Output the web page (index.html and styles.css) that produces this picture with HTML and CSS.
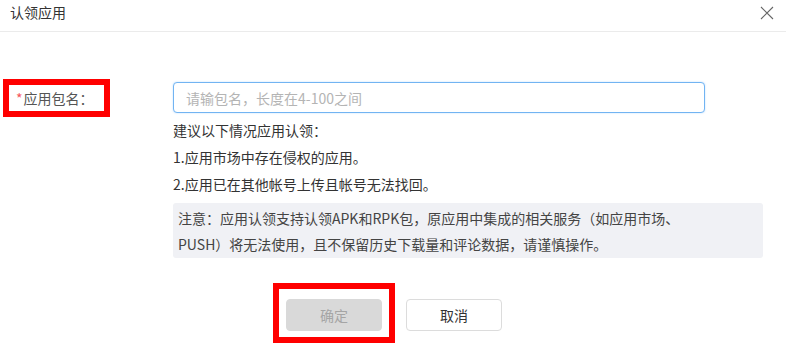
FILE: index.html
```html
<!DOCTYPE html>
<html lang="zh-CN">
<head>
    <meta charset="UTF-8">
    <meta name="viewport" content="width=device-width, initial-scale=1.0">
    <title>认领应用</title>
    <link rel="stylesheet" href="styles.css">
</head>
<body>
    <div class="dialog">
        <div class="dialog-header">
            <span class="dialog-title">认领应用</span>
            <span class="close-btn">
                <svg width="14" height="14" viewBox="0 0 14 14">
                    <path d="M1 1 L13 13 M13 1 L1 13" stroke="#666" stroke-width="1.1" fill="none"/>
                </svg>
            </span>
        </div>

        <div class="dialog-body">
            <div class="form-row">
                <div class="form-label marked">
                    <span class="required">*</span>应用包名：
                </div>
                <div class="form-field">
                    <input type="text" class="text-input" placeholder="请输包名，长度在4-100之间">
                    <p class="hint">建议以下情况应用认领：</p>
                    <p class="hint">1.应用市场中存在侵权的应用。</p>
                    <p class="hint">2.应用已在其他帐号上传且帐号无法找回。</p>
                    <div class="notice">
                        注意：应用认领支持认领APK和RPK包，原应用中集成的相关服务（如应用市场、<br>PUSH）将无法使用，且不保留历史下载量和评论数据，请谨慎操作。
                    </div>
                </div>
            </div>
        </div>

        <div class="dialog-footer">
            <span class="btn-mark">
                <button class="btn btn-disabled" disabled>确定</button>
            </span>
            <button class="btn btn-default">取消</button>
        </div>
    </div>
</body>
</html>
```

FILE: styles.css
```css
* {
    box-sizing: border-box;
}
body {
    margin: 0;
    background: #fff;
    font-family: "Noto Sans CJK SC", "Noto Sans", sans-serif;
    font-size: 14px;
    color: #333;
    overflow: hidden;
}
.dialog {
    width: 786px;
    height: 344px;
}
.dialog-header {
    height: 32px;
    display: flex;
    justify-content: space-between;
    align-items: flex-start;
    border-bottom: 1px solid #ebebeb;
    padding: 0 12px 0 10px;
}
.dialog-title {
    line-height: 24px;
    color: #333;
}
.close-btn {
    display: flex;
    margin-top: 6px;
}
.dialog-body {
    padding-top: 47px;
}
.form-row {
    display: flex;
    align-items: flex-start;
}
.form-label {
    margin-left: 3px;
    width: 107px;
    height: 38px;
    padding-left: 7px;
    line-height: 26px;
    color: #555;
}
.marked {
    border: 6px solid #f00;
}
.required {
    color: #f5565c;
    margin-right: 1px;
}
.form-field {
    margin-left: 63px;
    width: 590px;
}
.text-input {
    display: block;
    margin-top: 3px;
    width: 532px;
    height: 31px;
    border: 1px solid #72b4f2;
    border-radius: 4px;
    padding: 0 12px;
    font-family: inherit;
    font-size: 14px;
    outline: none;
    box-shadow: 0 0 2px rgba(64, 158, 255, 0.35);
}
.text-input::placeholder {
    color: #b4b4b4;
}
.hint {
    margin: 0;
    line-height: 27px;
}
.hint:first-of-type {
    margin-top: 4px;
}
.notice {
    margin-top: 5px;
    background: #f0f1f5;
    border-radius: 3px;
    padding: 2px 5px 1px 5px;
    line-height: 26px;
    color: #444;
}
.dialog-footer {
    margin-top: 41px;
    display: flex;
    justify-content: center;
    gap: 24px;
    padding-left: 2px;
}
.btn-mark {
    position: relative;
    display: flex;
}
.btn-mark::after {
    content: "";
    position: absolute;
    top: -16px;
    left: -13px;
    right: -13px;
    bottom: -12px;
    border: 6px solid #f00;
}
.btn {
    width: 96px;
    height: 32px;
    border-radius: 4px;
    font-family: inherit;
    font-size: 14px;
}
.btn-disabled {
    background: #d9d9d9;
    border: 1px solid #d9d9d9;
    color: #a5a5a5;
}
.btn-default {
    background: #fff;
    border: 1px solid #dcdcdc;
    color: #333;
}
```
